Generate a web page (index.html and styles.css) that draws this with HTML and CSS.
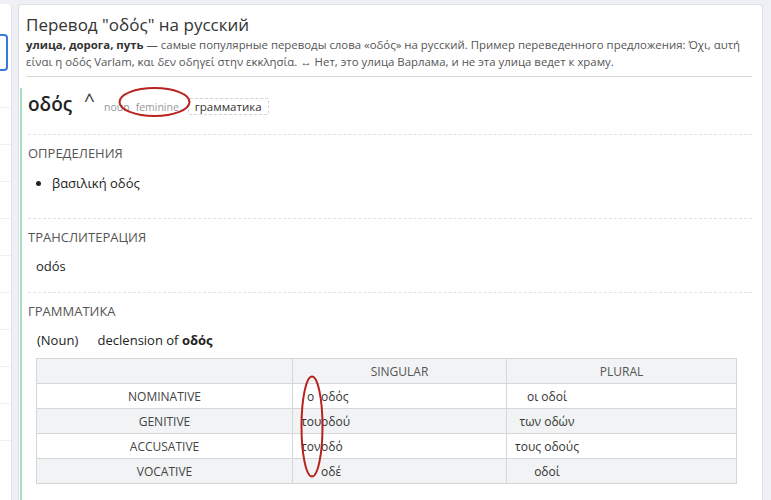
FILE: index.html
```html
<!DOCTYPE html>
<html lang="ru">

<head>
  <meta charset="UTF-8" />
  <title>Перевод "οδός" на русский</title>
  <link rel="stylesheet" href="styles.css">
</head>

<body>
  <div class="page">

    <div class="side">
      <div class="side-row"></div>
      <div class="side-input"></div>
      <div class="side-row"></div>
      <div class="side-row"></div>
      <div class="side-row"></div>
      <div class="side-row"></div>
      <div class="side-row"></div>
      <div class="side-row"></div>
      <div class="side-row"></div>
      <div class="side-row"></div>
      <div class="side-row"></div>
      <div class="side-row"></div>
    </div>

    <div class="card">
      <div class="card-head">
        <h1>Перевод "οδός" на русский</h1>
        <p class="summary"><b>улица, дорога, путь</b> — самые популярные переводы слова «οδός» на русский. Пример переведенного предложения: Όχι, αυτή<br>είναι η οδός Varlam, και δεν οδηγεί στην εκκλησία. ↔ Нет, это улица Варлама, и не эта улица ведет к храму.</p>
      </div>

      <div class="entry">
        <div class="entry-head">
          <span class="word">οδός</span>
          <span class="caret">^</span>
          <span class="tag">noun</span>
          <span class="tag">feminine</span>
          <span class="chip">грамматика</span>
        </div>

        <div class="section">
          <h2>Определения</h2>
          <ul class="defs">
            <li>βασιλική οδός</li>
          </ul>
        </div>

        <div class="section">
          <h2>Транслитерация</h2>
          <div class="translit">odós</div>
        </div>

        <div class="section last">
          <h2>Грамматика</h2>
          <div class="decl"><span class="pos">(Noun)</span> declension of <b>οδός</b></div>
          <table class="forms">
            <thead>
              <tr>
                <th></th>
                <th>Singular</th>
                <th>Plural</th>
              </tr>
            </thead>
            <tbody>
              <tr>
                <td class="case">Nominative</td>
                <td class="sg"><span class="art">ο</span>οδός</td>
                <td class="pl"><span>οι οδοί</span></td>
              </tr>
              <tr>
                <td class="case">Genitive</td>
                <td class="sg"><span class="art">του</span>οδού</td>
                <td class="pl"><span>των οδών</span></td>
              </tr>
              <tr>
                <td class="case">Accusative</td>
                <td class="sg"><span class="art">τον</span>οδό</td>
                <td class="pl"><span>τους οδούς</span></td>
              </tr>
              <tr>
                <td class="case">Vocative</td>
                <td class="sg"><span class="art"></span>οδέ</td>
                <td class="pl"><span>οδοί</span></td>
              </tr>
            </tbody>
          </table>
        </div>
      </div>
    </div>

  </div>

  <!-- красные пометки поверх страницы -->
  <svg class="marks" width="771" height="500" viewBox="0 0 771 500">
    <ellipse cx="154.5" cy="102" rx="35" ry="14" />
    <ellipse cx="312" cy="426.5" rx="10.5" ry="50" />
  </svg>
</body>

</html>
```

FILE: styles.css
```css
body {
  font-family: 'Open Sans', 'Noto Sans', sans-serif;
  margin: 0;
  background-color: #eef0f5;
  color: #222;
  overflow: hidden;
  height: 500px;
}

.page {
  display: flex;
  box-sizing: border-box;
  padding-top: 4px;
  height: 500px;
}

.side {
  width: 11px;
  background: #fff;
  border-right: 1px solid #dfe2e6;
  border-radius: 0 4px 0 0;
}

.side-row {
  height: 36px;
  border-bottom: 1px solid #eef0f2;
}

.side-row:first-child {
  height: 30px;
  border-bottom: none;
}

.side-input {
  height: 33px;
  border: 2px solid #3a78e0;
  border-left: none;
  border-radius: 0 4px 4px 0;
  margin-right: 3px;
}

.card {
  display: flex;
  flex-direction: column;
  width: 733px;
  margin-left: 6px;
  background: #fff;
  border: 1px solid #dcdfe4;
  border-bottom: none;
  border-radius: 4px 4px 0 0;
  padding-right: 10px;
}

.card-head {
  margin-left: 7px;
  padding-top: 9px;
  padding-bottom: 6px;
  border-bottom: 1px solid #d6d6d6;
}

h1 {
  font-size: 17px;
  font-weight: normal;
  margin: 0;
  color: #333;
  line-height: 22px;
}

.summary {
  margin: 0;
  font-size: 11.4px;
  line-height: 17px;
  color: #555;
  white-space: nowrap;
}

.summary b {
  color: #333;
}

.entry {
  flex: 1;
  margin-top: 11px;
  margin-left: 1px;
  border-left: 2px solid #a6e2c0;
  padding-left: 6px;
}

.entry-head {
  display: flex;
  align-items: baseline;
  height: 46px;
  border-bottom: 1px dashed #e2e2e2;
}

.word {
  font-size: 19px;
  font-weight: 600;
  color: #222;
  line-height: 32px;
}

.caret {
  align-self: flex-start;
  font-size: 19px;
  line-height: 24px;
  margin-left: 12px;
  margin-right: 9px;
  color: #333;
}

.tag {
  font-size: 10.5px;
  color: #999;
  margin-right: 6px;
}

.chip {
  font-size: 11.5px;
  color: #333;
  border: 1px dashed #cfd3d8;
  border-radius: 2px;
  padding: 0 6px;
  margin-left: 3px;
  line-height: 15px;
}

.section {
  border-bottom: 1px dashed #e2e2e2;
  padding-top: 9px;
}

.section.last {
  border-bottom: none;
  padding-top: 9px;
}

h2 {
  font-size: 13px;
  font-weight: normal;
  text-transform: uppercase;
  color: #555;
  margin: 0;
  line-height: 19px;
}

.defs {
  margin: 10px 0 0;
  padding-left: 24px;
  font-size: 13px;
  line-height: 20px;
  padding-bottom: 25px;
}

.translit {
  font-size: 13px;
  line-height: 20px;
  margin: 9px 0 0 8px;
  padding-bottom: 16px;
}

.decl {
  font-size: 13px;
  line-height: 20px;
  margin: 9px 0 0 9px;
}

.pos {
  margin-right: 16px;
}

.forms {
  width: 701px;
  margin: 8px 0 0 8px;
  border-collapse: collapse;
  font-size: 12px;
  color: #333;
}

.forms th,
.forms td {
  border: 1px solid #d4d7da;
  height: 24px;
  padding: 0;
  font-weight: normal;
}

.forms th {
  background: #f1f3f4;
  text-transform: uppercase;
  color: #555;
  text-align: center;
}

.forms th:first-child {
  width: 255px;
}

.forms th:nth-child(2) {
  width: 213px;
}

.forms tbody tr:nth-child(even) {
  background: #f1f3f4;
}

.case {
  text-align: center;
  text-transform: uppercase;
  color: #444;
}

.sg {
  padding-left: 8px !important;
}

.art {
  display: inline-block;
  width: 19px;
  text-align: center;
  margin-right: 1px;
}

.pl span {
  display: inline-block;
  width: 78px;
  margin-left: 1px;
  text-align: center;
}

.marks {
  position: absolute;
  left: 0;
  top: 0;
  pointer-events: none;
}

.marks ellipse {
  fill: none;
  stroke: #b8231f;
  stroke-width: 2;
}
```
